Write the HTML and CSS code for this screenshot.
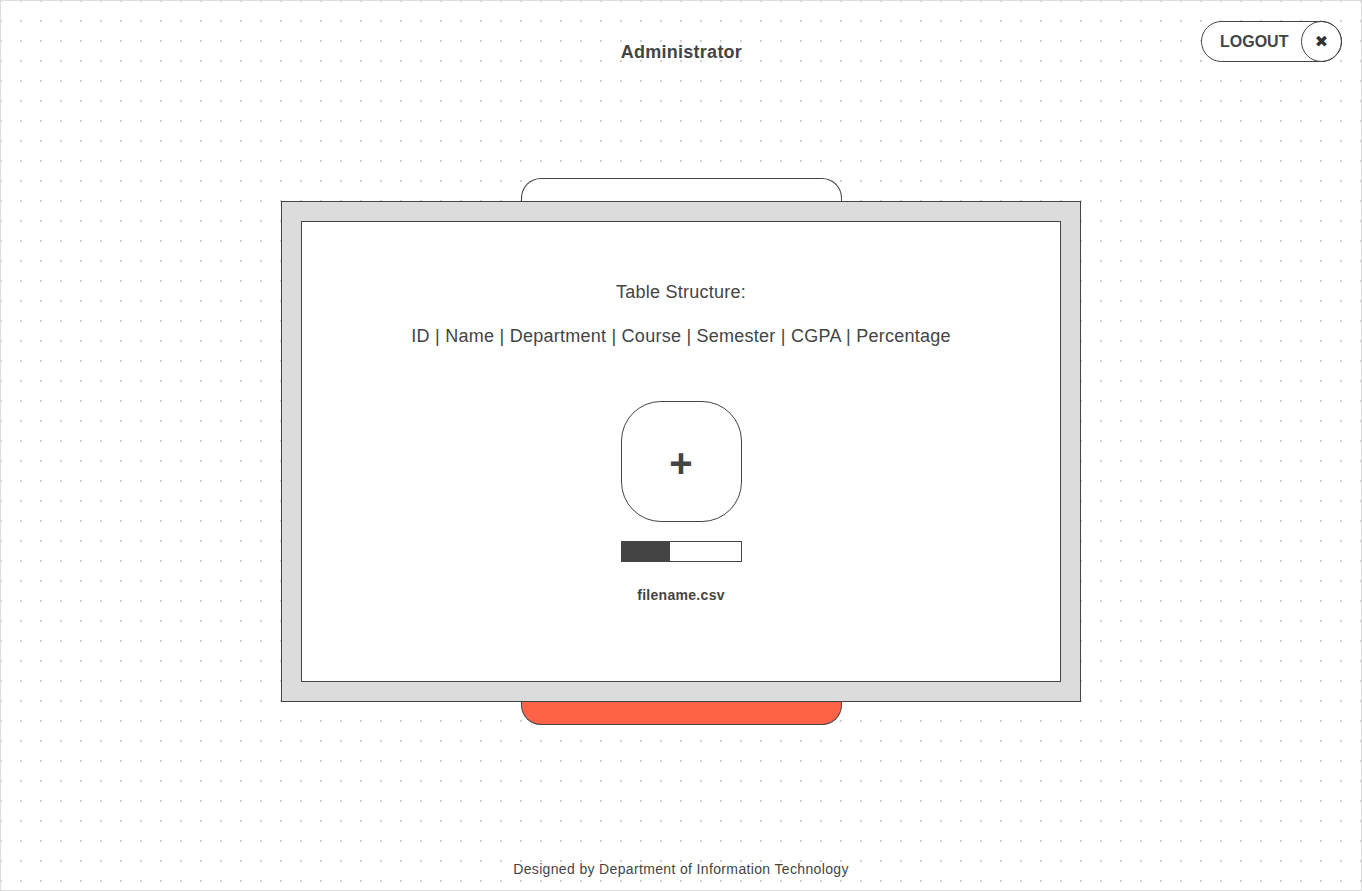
FILE: index.html
```html
<!DOCTYPE html>
<html lang="en">
<head>
<meta charset="utf-8">
<title>Administrator</title>
<link rel="stylesheet" href="styles.css">
</head>
<body>
<div class="page">
  <header class="topbar">
    <div class="spacer"></div>
    <h1 class="title">Administrator</h1>
    <div class="actions">
      <button class="logout" type="button">
        <span class="logout-label">LOGOUT</span>
        <span class="logout-icon">&#10006;</span>
      </button>
    </div>
  </header>

  <main class="uploader">
    <div class="tab tab-top"></div>
    <div class="frame">
      <div class="panel">
        <h2 class="panel-title">Table Structure:</h2>
        <p class="panel-cols">ID | Name | Department | Course | Semester | CGPA | Percentage</p>
        <div class="drop">+</div>
        <div class="progress"><div class="progress-fill" style="width:48px"></div></div>
        <div class="filename">filename.csv</div>
      </div>
    </div>
    <div class="tab tab-bottom"></div>
  </main>

  <footer class="footer">Designed by Department of Information Technology</footer>
</div>
</body>
</html>
```
FILE: styles.css
```css
html, body {
  margin: 0;
  padding: 0;
  background: #fff;
}

.page {
  box-sizing: border-box;
  height: 891px;
  border: 1px solid #dcdcdc;
  display: flex;
  flex-direction: column;
  font-family: "Liberation Sans", Arial, sans-serif;
  letter-spacing: 0.25px;
  color: #444;
  background-color: #fff;
  background-image: radial-gradient(circle at 1px 1px, #cfcfcf 0.7px, transparent 1.1px);
  background-size: 20px 20px;
  background-position: 19px 19px;
}

.topbar {
  display: grid;
  grid-template-columns: 1fr auto 1fr;
  align-items: start;
  padding: 20px 19px 0 20px;
}

.title {
  margin: 20px 0 0 0;
  font-size: 18px;
  line-height: 22px;
  font-weight: bold;
  color: #444;
}

.actions {
  display: flex;
  justify-content: flex-end;
}

.logout {
  box-sizing: border-box;
  display: flex;
  align-items: center;
  height: 41px;
  width: 141px;
  padding: 0 0 0 18px;
  border: 1px solid #444;
  border-radius: 21px;
  background: #fff;
  font-family: "Liberation Sans", Arial, sans-serif;
  letter-spacing: 0;
  color: #444;
  cursor: pointer;
}

.logout-label {
  flex: 1;
  text-align: left;
  font-size: 16px;
  font-weight: bold;
}

.logout-icon {
  box-sizing: border-box;
  width: 41px;
  height: 41px;
  margin-right: -1px;
  border: 1px solid #444;
  border-radius: 50%;
  display: flex;
  align-items: center;
  justify-content: center;
  font-family: "DejaVu Sans", sans-serif;
  font-size: 16px;
  color: #333;
}

.uploader {
  display: flex;
  flex-direction: column;
  align-items: center;
  margin-top: 115px;
}

.tab {
  box-sizing: border-box;
  width: 321px;
  border: 1px solid #444;
  margin-left: 1px;
}

.tab-top {
  height: 23px;
  border-bottom: none;
  border-radius: 20px 20px 0 0;
  background: #fff;
}

.tab-bottom {
  height: 23px;
  border-top: none;
  border-radius: 0 0 20px 20px;
  background: #ff6347;
}

.frame {
  box-sizing: border-box;
  width: 800px;
  height: 501px;
  padding: 19px;
  border: 1px solid #444;
  background: #dcdcdc;
}

.panel {
  box-sizing: border-box;
  height: 461px;
  border: 1px solid #444;
  background: #fff;
  display: flex;
  flex-direction: column;
  align-items: center;
  padding-top: 59px;
}

.panel-title {
  margin: 0;
  font-size: 18px;
  line-height: 22px;
  font-weight: normal;
}

.panel-cols {
  margin: 22px 0 0 0;
  font-size: 18px;
  line-height: 22px;
}

.drop {
  box-sizing: border-box;
  width: 121px;
  height: 121px;
  margin-top: 54px;
  padding-top: 2px;
  border: 1px solid #444;
  border-radius: 40px;
  display: flex;
  align-items: center;
  justify-content: center;
  font-size: 40px;
  font-weight: bold;
  line-height: 1;
  letter-spacing: 0;
}

.progress {
  box-sizing: border-box;
  width: 121px;
  height: 21px;
  margin-top: 19px;
  border: 1px solid #444;
  background: #fff;
}

.progress-fill {
  height: 100%;
  background: #444;
}

.filename {
  margin-top: 25px;
  font-size: 14px;
  line-height: 16px;
  font-weight: bold;
  letter-spacing: 0.3px;
}

.footer {
  margin-top: auto;
  padding-bottom: 13px;
  text-align: center;
  font-size: 14px;
  line-height: 16px;
  letter-spacing: 0.35px;
}
```
